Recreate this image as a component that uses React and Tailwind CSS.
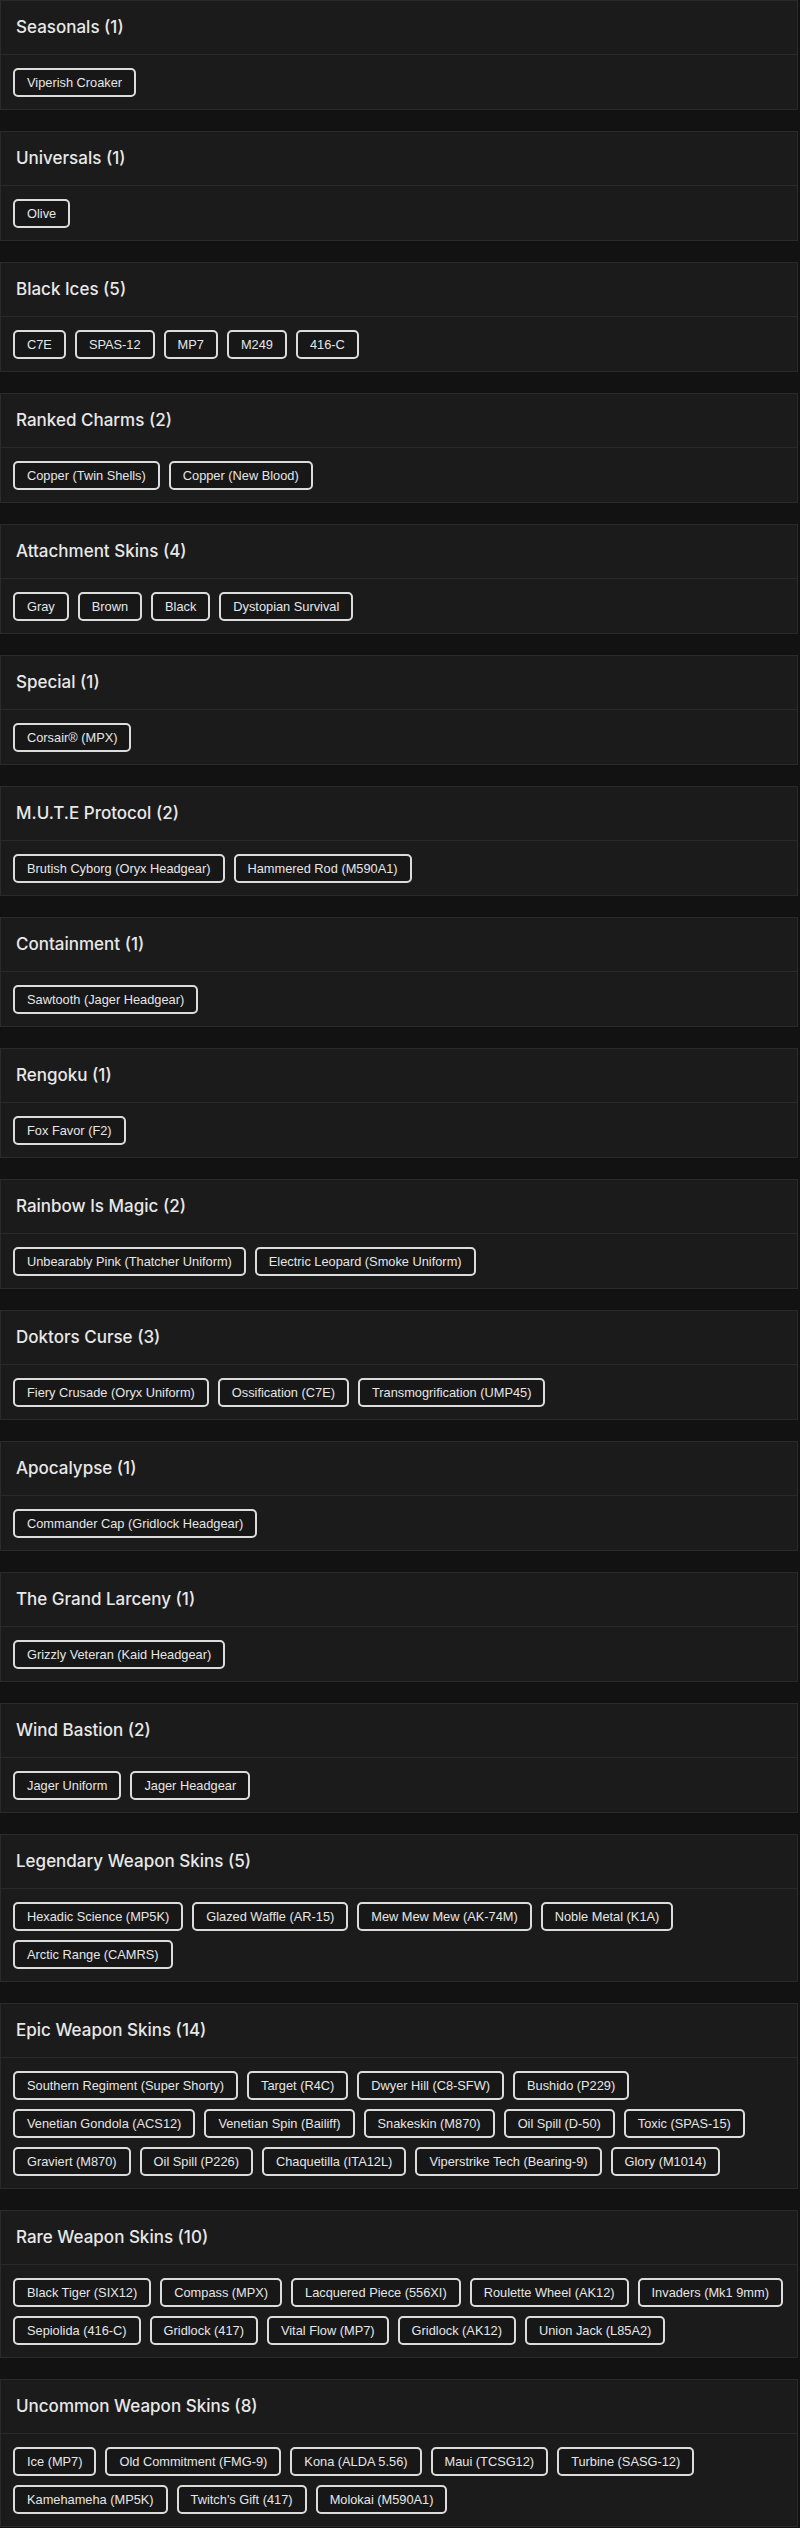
const sections = [
    { title: 'Seasonals', items: ['Viperish Croaker'] },
    { title: 'Universals', items: ['Olive'] },
    { title: 'Black Ices', items: ['C7E', 'SPAS-12', 'MP7', 'M249', '416-C'] },
    { title: 'Ranked Charms', items: ['Copper (Twin Shells)', 'Copper (New Blood)'] },
    { title: 'Attachment Skins', items: ['Gray', 'Brown', 'Black', 'Dystopian Survival'] },
    { title: 'Special', items: ['Corsair® (MPX)'] },
    { title: 'M.U.T.E Protocol', items: ['Brutish Cyborg (Oryx Headgear)', 'Hammered Rod (M590A1)'] },
    { title: 'Containment', items: ['Sawtooth (Jager Headgear)'] },
    { title: 'Rengoku', items: ['Fox Favor (F2)'] },
    { title: 'Rainbow Is Magic', items: ['Unbearably Pink (Thatcher Uniform)', 'Electric Leopard (Smoke Uniform)'] },
    { title: 'Doktors Curse', items: ['Fiery Crusade (Oryx Uniform)', 'Ossification (C7E)', 'Transmogrification (UMP45)'] },
    { title: 'Apocalypse', items: ['Commander Cap (Gridlock Headgear)'] },
    { title: 'The Grand Larceny', items: ['Grizzly Veteran (Kaid Headgear)'] },
    { title: 'Wind Bastion', items: ['Jager Uniform', 'Jager Headgear'] },
    {
        title: 'Legendary Weapon Skins',
        items: ['Hexadic Science (MP5K)', 'Glazed Waffle (AR-15)', 'Mew Mew Mew (AK-74M)', 'Noble Metal (K1A)', 'Arctic Range (CAMRS)'],
    },
    {
        title: 'Epic Weapon Skins',
        items: [
            'Southern Regiment (Super Shorty)', 'Target (R4C)', 'Dwyer Hill (C8-SFW)', 'Bushido (P229)',
            'Venetian Gondola (ACS12)', 'Venetian Spin (Bailiff)', 'Snakeskin (M870)', 'Oil Spill (D-50)', 'Toxic (SPAS-15)',
            'Graviert (M870)', 'Oil Spill (P226)', 'Chaquetilla (ITA12L)', 'Viperstrike Tech (Bearing-9)', 'Glory (M1014)',
        ],
    },
    {
        title: 'Rare Weapon Skins',
        items: [
            'Black Tiger (SIX12)', 'Compass (MPX)', 'Lacquered Piece (556XI)', 'Roulette Wheel (AK12)', 'Invaders (Mk1 9mm)',
            'Sepiolida (416-C)', 'Gridlock (417)', 'Vital Flow (MP7)', 'Gridlock (AK12)', 'Union Jack (L85A2)',
        ],
    },
    {
        title: 'Uncommon Weapon Skins',
        items: [
            'Ice (MP7)', 'Old Commitment (FMG-9)', 'Kona (ALDA 5.56)', 'Maui (TCSG12)', 'Turbine (SASG-12)',
            'Kamehameha (MP5K)', "Twitch's Gift (417)", 'Molokai (M590A1)',
        ],
    },
]

function Section({ title, items }) {
    return (
        <div className="bg-[#1b1b1b] border border-[#2a2a2a]">
            <div className="h-[54px] flex items-center px-[15px] border-b border-[#2a2a2a]">
                <h2 className="font-['Inter',sans-serif] text-[17px] font-medium text-[#e8e8e8] leading-none">
                    {title} ({items.length})
                </h2>
            </div>
            <div className="flex flex-wrap gap-[9px] pl-3 pr-2 pt-[13px] pb-3">
                {items.map((item, i) => (
                    <span
                        key={i}
                        className="border-2 border-[#dcdcdc] rounded-[5px] bg-[#171717] px-3 py-1 text-[12.8px] leading-[17px] text-[#e6e6e6]"
                    >
                        {item}
                    </span>
                ))}
            </div>
        </div>
    )
}

export default function App() {
    return (
        <div className="min-h-screen bg-[#121212] pr-[2px] font-['Liberation_Sans',Arial,sans-serif]">
            <div className="flex flex-col gap-[21px]">
                {sections.map((s) => (
                    <Section key={s.title} {...s} />
                ))}
            </div>
        </div>
    )
}
